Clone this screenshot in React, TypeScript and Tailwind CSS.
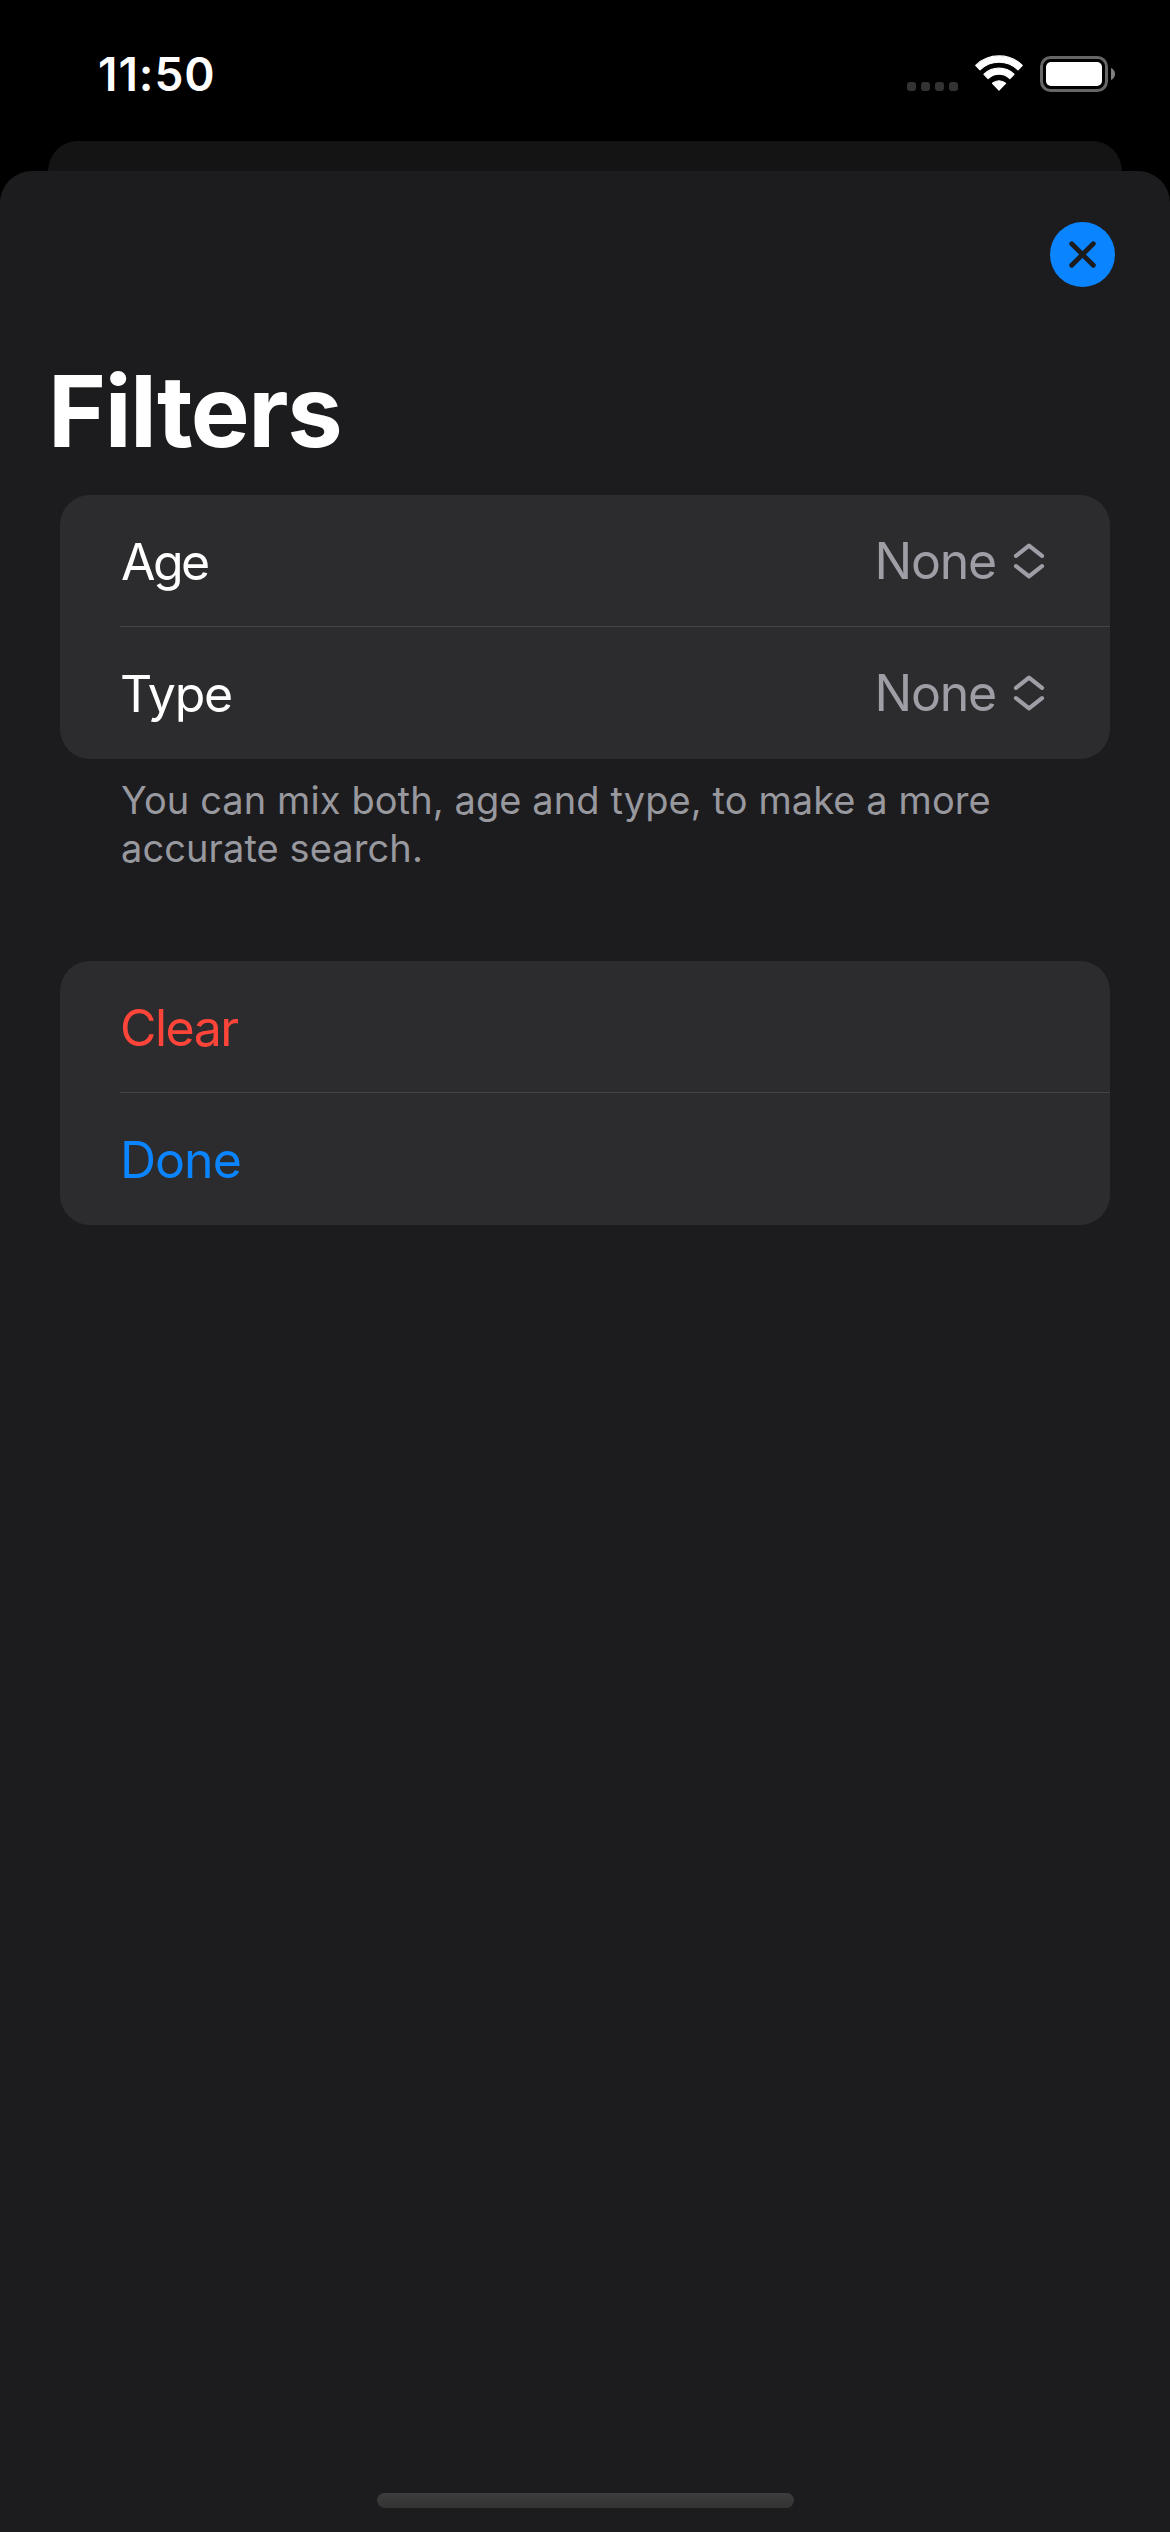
import React from "react";

function WifiIcon() {
  return (
    <svg width="48" height="36" viewBox="0 0 48 36" fill="#fff" stroke="#fff" strokeWidth="1.2" strokeLinejoin="round">
      <path d="M0.7 10.4A33.5 33.5 0 0 1 47.3 10.4L43 14.9A27.4 27.4 0 0 0 5 14.9Z" />
      <path d="M9 19.3A21.5 21.5 0 0 1 39 19.3L34.9 23.6A15.6 15.6 0 0 0 13.1 23.6Z" />
      <path d="M17.5 28.3A9.6 9.6 0 0 1 30.5 28.3L24 35.2Z" />
    </svg>
  );
}

function BatteryIcon() {
  return (
    <svg width="76" height="36" viewBox="0 0 76 36" fill="none">
      <rect x="1.5" y="1.5" width="65" height="33" rx="9" stroke="#666" strokeWidth="3" />
      <rect x="6" y="6" width="56" height="24" rx="5" fill="#fff" />
      <path d="M71 12c2.6 1 4 3.4 4 6s-1.4 5-4 6z" fill="#808080" />
    </svg>
  );
}

function UpDownIcon() {
  return (
    <svg width="36" height="44" viewBox="0 0 36 44" fill="none" stroke="#9f9ea6" strokeWidth="4.2" strokeLinecap="round" strokeLinejoin="round">
      <path d="M5 16.9 18 6.7l13 10.2" />
      <path d="M5 27.1 18 37.3l13-10.2" />
    </svg>
  );
}

function StatusBar() {
  return (
    <header className="flex h-[141px] shrink-0 items-start justify-between pr-[54px] pl-[98px]">
      <time className="mt-[46px] text-[46px] leading-[56px] font-semibold tracking-[0.95px] text-white">11:50</time>
      <div className="mt-[55px] flex items-start">
        <div className="mt-[27px] flex gap-[5px]">
          {[0, 1, 2, 3].map((n) => (
            <span key={n} className="size-[9px] rounded-[3px] bg-[#333333]" />
          ))}
        </div>
        <div className="ml-[17px]">
          <WifiIcon />
        </div>
        <div className="mt-px ml-[17px]">
          <BatteryIcon />
        </div>
      </div>
    </header>
  );
}

function Separator() {
  return <div className="ml-[60px] h-px bg-[#444446]" />;
}

function Picker({ label, className }: { label: string; className: string }) {
  return (
    <>
      <span className={className}>{label}</span>
      <button className="flex items-center gap-[15px]">
        <span className="tracking-[-1.23px] text-[#9f9ea6]">None</span>
        <UpDownIcon />
      </button>
    </>
  );
}

export default function App() {
  return (
    <div className="flex h-[2532px] w-[1170px] flex-col overflow-hidden bg-black font-[Inter,sans-serif]">
      <StatusBar />
      <div className="mx-[48px] h-[30px] shrink-0 rounded-t-[30px] bg-[#141414]" />
      <main className="flex flex-1 flex-col rounded-t-[32px] bg-[#1c1c1e] pt-[51px]">
        <button aria-label="Close" className="mr-[55px] flex size-[65px] items-center justify-center self-end rounded-full bg-[#0a84ff]">
          <svg width="65" height="65" viewBox="0 0 65 65" fill="none" stroke="#1c1c1e" strokeWidth="4.8" strokeLinecap="round">
            <path d="M21.7 21.7 43.3 43.3M43.3 21.7 21.7 43.3" />
          </svg>
        </button>
        <h1 className="mt-[64px] ml-[48px] text-[99px] leading-[120px] font-bold tracking-[-1.42px] text-white">Filters</h1>

        <section className="mx-[60px] mt-[24px] rounded-[30px] bg-[#2c2c2e] text-[50px] leading-[60px] text-white">
          <div className="flex h-[131px] items-center justify-between pr-[63px] pl-[61px]">
            <Picker label="Age" className="pt-[2px] tracking-[-2.58px]" />
          </div>
          <Separator />
          <div className="flex h-[132px] items-center justify-between pr-[63px] pl-[60px]">
            <Picker label="Type" className="pt-[2px] tracking-[-1.29px]" />
          </div>
        </section>

        <p className="mt-[17px] ml-[121px] text-[38px] leading-[48px] tracking-[0.09px] text-[#98989f]">
          You can mix both, age and type, to make a more
          <br />
          accurate search.
        </p>

        <section className="mx-[60px] mt-[89px] rounded-[30px] bg-[#2c2c2e] pl-[60px] text-[50px] leading-[60px]">
          <button className="flex h-[131px] w-full items-center pt-[2px] tracking-[-1.51px] text-[#ff453a]">Clear</button>
          <div className="h-px bg-[#444446]" />
          <button className="flex h-[132px] w-full items-center pt-[2px] tracking-[-0.97px] text-[#0a84ff]">Done</button>
        </section>

        <div className="mx-auto mt-auto mb-[24px] h-[15px] w-[417px] rounded-full bg-linear-to-b from-[#3d3d3d] to-[#333333]" />
      </main>
    </div>
  );
}
